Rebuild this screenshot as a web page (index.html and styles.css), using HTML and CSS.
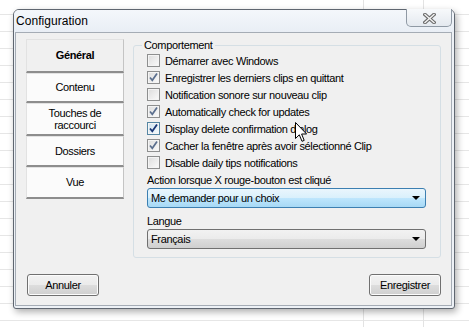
FILE: index.html
```html
<!DOCTYPE html>
<html lang="fr">
<head>
<meta charset="utf-8">
<title>Configuration</title>
<link rel="stylesheet" href="styles.css">
</head>
<body>
<div class="window">
  <div class="titlebar">
    <span class="title">Configuration</span>
    <div class="close">
      <svg width="13" height="11" viewBox="0 0 13 11"><path d="M2 1.5 L11 9.5 M11 1.5 L2 9.5" stroke="#6b6b6b" stroke-width="3.6" stroke-linecap="square" fill="none"/><path d="M2 1.5 L11 9.5 M11 1.5 L2 9.5" stroke="#f4f4f4" stroke-width="1.4" stroke-linecap="square" fill="none"/></svg>
    </div>
  </div>
  <div class="panel">
    <div class="top">
      <div class="tabs">
        <div class="tab tab-sel t34">Général</div>
        <div class="tab t30">Contenu</div>
        <div class="tab t33">Touches de<br>raccourci</div>
        <div class="tab t31">Dossiers</div>
        <div class="tab t32">Vue</div>
      </div>
      <div class="group">
        <span class="legend">Comportement</span>
        <div class="row"><span class="cb"></span><span>Démarrer avec Windows</span></div>
        <div class="row"><span class="cb"><svg width="11" height="11" viewBox="0 0 11 11"><path d="M2 5.5 L4.3 8.3 L9 1.5" stroke="#5b6f8e" stroke-width="1.7" fill="none"/></svg></span><span>Enregistrer les derniers clips en quittant</span></div>
        <div class="row"><span class="cb"></span><span>Notification sonore sur nouveau clip</span></div>
        <div class="row"><span class="cb"><svg width="11" height="11" viewBox="0 0 11 11"><path d="M2 5.5 L4.3 8.3 L9 1.5" stroke="#5b6f8e" stroke-width="1.7" fill="none"/></svg></span><span>Automatically check for updates</span></div>
        <div class="row"><span class="cb cb-hot"><svg width="11" height="11" viewBox="0 0 11 11"><path d="M2 5.5 L4.3 8.3 L9 1.5" stroke="#1a3675" stroke-width="1.8" fill="none"/></svg></span><span>Display delete confirmation dialog</span></div>
        <div class="row"><span class="cb"><svg width="11" height="11" viewBox="0 0 11 11"><path d="M2 5.5 L4.3 8.3 L9 1.5" stroke="#5b6f8e" stroke-width="1.7" fill="none"/></svg></span><span>Cacher la fenêtre après avoir sélectionné Clip</span></div>
        <div class="row"><span class="cb"></span><span>Disable daily tips notifications</span></div>
        <div class="label l1">Action lorsque X rouge-bouton est cliqué</div>
        <div class="select select-focus"><span>Me demander pour un choix</span><span class="arrow"></span></div>
        <div class="label l2">Langue</div>
        <div class="select"><span>Français</span><span class="arrow"></span></div>
      </div>
    </div>
    <div class="buttons">
      <div class="btn btn-left">Annuler</div>
      <div class="btn">Enregistrer</div>
    </div>
  </div>
</div>
<svg class="cursor" width="13" height="21" viewBox="0 0 13 21"><path d="M0.5 0.5 L0.5 16.5 L4.3 12.8 L7 19.3 L9.2 18.4 L6.6 12 L11.6 12 Z" fill="#fff" stroke="#000" stroke-width="1" stroke-linejoin="miter"/></svg>
</body>
</html>
```
FILE: styles.css
```css
html, body {
  margin: 0;
  padding: 0;
}
body {
  width: 469px;
  height: 327px;
  overflow: hidden;
  position: relative;
  font-family: "Liberation Sans", Arial, sans-serif;
  font-size: 11px;
  color: #000;
  background-color: #fff;
  background-image:
    linear-gradient(to right, transparent 363px, #e3e3e3 363px, #e3e3e3 364px, transparent 364px),
    linear-gradient(to right, transparent 423px, #e3e3e3 423px, #e3e3e3 424px, transparent 424px),
    repeating-linear-gradient(to bottom, transparent 0, transparent 16px, #e6e6e6 16px, #e6e6e6 17px);
  background-position: 0 0, 0 0, 0 -2px;
  padding-top: 9px;
  padding-left: 13px;
  box-sizing: border-box;
}
.window {
  width: 442px;
  height: 300px;
  box-sizing: border-box;
  border: 1px solid #5f6670;
  border-radius: 6px 6px 3px 3px;
  background: #edf1f6;
  box-shadow: 2px 3px 7px rgba(0, 0, 0, 0.32);
  display: flex;
  flex-direction: column;
}
.titlebar {
  height: 22px;
  position: relative;
  display: flex;
  align-items: center;
  padding-left: 2px;
  background: linear-gradient(#f4f7fb, #e9eef5);
  border-radius: 5px 5px 0 0;
}
.title {
  font-size: 12px;
  letter-spacing: 0.05px;
  padding-top: 0px;
}
.close {
  position: absolute;
  top: -1px;
  right: 2px;
  width: 46px;
  height: 18px;
  box-sizing: border-box;
  border: 1px solid #8f99a4;
  border-top: none;
  border-radius: 0 0 5px 5px;
  background: linear-gradient(#f7f9fb, #e4e9ef);
  display: flex;
  align-items: center;
  justify-content: center;
  padding-top: 1px;
}
.panel {
  flex: 1;
  margin: 0 2px 2px 1px;
  border: 1px solid #a5acb5;
  background: #f0f0f0;
  padding: 6px 10px 0 10px;
  display: flex;
  flex-direction: column;
}
.top {
  display: flex;
  gap: 9px;
}
.tabs {
  width: 98px;
  display: flex;
  flex-direction: column;
}
.tab {
  box-sizing: border-box;
  display: flex;
  align-items: center;
  justify-content: center;
  text-align: center;
  line-height: 12px;
  letter-spacing: -0.35px;
  background: #fbfbfb;
  border-top: 1px solid #e2e2e2;
  border-left: 1px solid #e2e2e2;
  border-right: 1px solid #c4c4c4;
  border-bottom: 2px solid #8d8d8d;
  padding-bottom: 1px;
}
.tab-sel {
  background: #f0f0f0;
  font-weight: bold;
}
.t34 { height: 34px; }
.t30 { height: 30px; }
.t33 { height: 33px; }
.t31 { height: 31px; }
.t32 { height: 32px; }
.group {
  position: relative;
  margin-top: 6px;
  width: 308px;
  height: 213px;
  box-sizing: border-box;
  border: 1px solid #d5dfe5;
  border-radius: 3px;
  padding: 6px 14px 0 13px;
  letter-spacing: -0.35px;
}
.legend {
  position: absolute;
  top: -7px;
  left: 8px;
  padding: 0 2px;
  background: #f0f0f0;
  line-height: 13px;
}
.row {
  height: 17px;
  display: flex;
  align-items: center;
  gap: 5px;
}
.cb {
  width: 13px;
  height: 13px;
  box-sizing: border-box;
  border: 1px solid #8e8f8f;
  background: linear-gradient(135deg, #dcdcdc, #fbfbfb);
  box-shadow: inset 0 0 0 1px #f4f4f4;
  display: flex;
  align-items: center;
  justify-content: center;
  flex: none;
}
.cb-hot {
  border-color: #5586a3;
  background: linear-gradient(135deg, #cfe3f0, #f4fafd);
}
.label {
  line-height: 14px;
}
.l1 { margin-top: 2px; }
.l2 { margin-top: 6px; }
.select {
  margin-top: 1px;
  height: 20px;
  box-sizing: border-box;
  border: 1px solid #707070;
  border-radius: 3px;
  background: linear-gradient(#f2f2f2 0%, #ebebeb 50%, #dddddd 51%, #cfcfcf 100%);
  display: flex;
  align-items: center;
  justify-content: space-between;
  padding: 0 4px 0 3px;
}
.select-focus {
  border-color: #3c7fb1;
  background: linear-gradient(#eaf6fd 0%, #d9f0fc 50%, #bee6fd 51%, #a7d9f5 100%);
}
.arrow {
  width: 0;
  height: 0;
  border-left: 4px solid transparent;
  border-right: 4px solid transparent;
  border-top: 4px solid #000;
  margin-right: 1px;
}
.buttons {
  display: flex;
  justify-content: space-between;
  margin-top: 16px;
}
.btn {
  width: 72px;
  height: 22px;
  box-sizing: border-box;
  border: 1px solid #707070;
  border-radius: 3px;
  background: linear-gradient(#f2f2f2 0%, #ebebeb 50%, #dddddd 51%, #cfcfcf 100%);
  box-shadow: inset 0 0 0 1px #fcfcfc;
  display: flex;
  align-items: center;
  justify-content: center;
  letter-spacing: -0.35px;
}
.btn-left {
  margin-left: 1px;
}
.cursor {
  position: absolute;
  left: 295px;
  top: 122px;
}
```
